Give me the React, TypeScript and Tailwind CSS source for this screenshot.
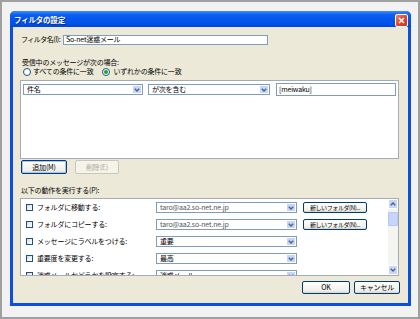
import React from 'react';

const Chevron = ({ up = false }: { up?: boolean }) => (
  <svg width="6" height="4" viewBox="0 0 6 4" className={up ? 'rotate-180' : ''}>
    <path d="M0.8 0.8 L3 3 L5.2 0.8" fill="none" stroke="#4d6185" strokeWidth="1.4" />
  </svg>
);

const Select = ({ value, w, muted = false }: { value: string; w: string; muted?: boolean }) => (
  <div className={`shrink-0 flex items-center border border-[#7f9db9] bg-white ${w} h-[11px]`}>
    <span className={`flex-1 pl-[3px] truncate ${muted ? 'text-[#555]' : 'text-black'}`}>{value}</span>
    <span className="w-[10px] h-full flex items-center justify-center bg-[#c6d6fb] border border-white">
      <Chevron />
    </span>
  </div>
);

const XpButton = ({ children, w, disabled = false, focused = false }: { children: React.ReactNode; w: string; disabled?: boolean; focused?: boolean }) => (
  <div
    className={`flex items-center justify-center rounded-[2px] border h-full ${w} ${
      disabled ? 'border-[#c9c7ba] text-[#aca899] bg-[#f5f4ea]' : 'border-[#003c74] text-black bg-[linear-gradient(to_bottom,#ffffff,#f0efe9_80%,#d8d2c6)]'
    } ${focused ? 'shadow-[inset_0_0_0_1px_#a9c5f5]' : ''}`}
  >
    {children}
  </div>
);

const Radio = ({ checked = false }: { checked?: boolean }) => (
  <span className="w-[8px] h-[8px] rounded-full border border-[#1c5180] bg-white flex items-center justify-center">
    {checked && <span className="w-[4px] h-[4px] rounded-full bg-[#21a121]" />}
  </span>
);

const Check = () => (
  <span className="shrink-0 w-[7px] h-[7px] border border-[#1c5180] bg-[linear-gradient(135deg,#dcdcd7,#ffffff)]" />
);

const actions = [
  { label: 'フォルダに移動する:', value: 'taro@aa2.so-net.ne.jp', folder: true },
  { label: 'フォルダにコピーする:', value: 'taro@aa2.so-net.ne.jp', folder: true },
  { label: 'メッセージにラベルをつける:', value: '重要', folder: false },
  { label: '重要度を変更する:', value: '最高', folder: false },
  { label: '迷惑メールかどうかを設定する:', value: '迷惑メール', folder: false },
];

export default function App() {
  return (
    <div className="w-[420px] h-[319px] border-2 border-[#a0a0a0] bg-[#f2f2f2] pl-[8px] pr-[7px] pt-[9px] pb-[11px] font-['Noto_Sans_CJK_JP','Noto_Sans',sans-serif] text-[7px] leading-[9px] tracking-[-0.2px] whitespace-nowrap text-black overflow-hidden">
      <div className="w-[401px] h-[295px] flex flex-col rounded-t-[5px] bg-[#0a4fe0]">
        <div className="h-[16px] flex items-center justify-between pl-[4px] pr-[3px] rounded-t-[5px] bg-[linear-gradient(to_bottom,#3d8dff,#0a5cf2_25%,#0053e8_75%,#0046d6)]">
          <span className="text-white font-bold text-[7.5px] [text-shadow:1px_1px_0_#0a2f8f]">フィルタの設定</span>
          <span className="w-[13px] h-[13px] mt-[2px] rounded-[2px] border border-white bg-[linear-gradient(135deg,#f0876a,#e2462c_50%,#c23a1e)] flex items-center justify-center">
            <svg width="7" height="7" viewBox="0 0 7 7">
              <path d="M1 1 L6 6 M6 1 L1 6" stroke="white" strokeWidth="1.6" />
            </svg>
          </span>
        </div>
        <div className="flex-1 mx-[3px] mb-[3px] bg-[#ece9d8] flex flex-col pl-[7px] pr-[9px]">
          <div className="mt-[7px] h-[11px] flex items-center">
            <span className="ml-[1px] w-[42px] tracking-[-0.5px]">フィルタ名(I):</span>
            <div className="w-[205px] h-[10px] border border-[#7f9db9] bg-white flex items-center pl-[2px]">So-net迷惑メール</div>
          </div>
          <div className="mt-[13px] h-[9px] ml-[2px]">受信中のメッセージが次の場合:</div>
          <div className="h-[9px] flex items-center">
            <span className="ml-[3px]"><Radio /></span>
            <span className="ml-[2px]">すべての条件に一致</span>
            <span className="ml-[9px]"><Radio checked /></span>
            <span className="ml-[3px]">いずれかの条件に一致</span>
          </div>
          <div className="mt-[4px] h-[79px] w-[379px] border border-[#a5acb5] bg-white pl-[2px] pt-[2px]">
            <div className="flex items-center h-[13px]">
              <Select value="件名" w="w-[120px]" />
              <span className="ml-[5px]"><Select value="が次を含む" w="w-[122px]" /></span>
              <div className="ml-[6px] w-[120px] h-[13px] border border-[#7f9db9] bg-white flex items-center pl-[2px]">[meiwaku]</div>
            </div>
          </div>
          <div className="mt-[1px] h-[14px] flex ml-[1px] gap-[8px]">
            <XpButton w="w-[46px]" focused>追加(M)</XpButton>
            <XpButton w="w-[44px]" disabled>削除(E)</XpButton>
          </div>
          <div className="mt-[12px] h-[9px] ml-[1px]">以下の動作を実行する(P):</div>
          <div className="mt-[3px] h-[78px] w-[379px] border border-[#a5acb5] bg-white flex overflow-hidden">
            <div className="flex-1 flex flex-col">
              {actions.map((a) => (
                <div key={a.label} className="h-[17px] shrink-0 flex items-center pl-[5px]">
                  <Check />
                  <span className="ml-[4px] w-[119px] shrink-0 overflow-hidden">{a.label}</span>
                  <Select value={a.value} w="w-[141px]" muted={a.folder} />
                  {a.folder && (
                    <span className="ml-[6px] h-[11px] flex shrink-0">
                      <XpButton w="w-[64px]"><span className="text-[6px] tracking-[-0.4px]">新しいフォルダ(N)...</span></XpButton>
                    </span>
                  )}
                </div>
              ))}
            </div>
            <div className="w-[10px] shrink-0 flex flex-col bg-[#f4f4f0]">
              <span className="h-[10px] rounded-[1px] bg-[#c6d6fb] border border-white flex items-center justify-center"><Chevron up /></span>
              <span className="mt-[3px] h-[14px] rounded-[1px] bg-[#c6d6fb] border border-[#b4c8f6]" />
              <span className="flex-1" />
              <span className="h-[10px] rounded-[1px] bg-[#c6d6fb] border border-white flex items-center justify-center"><Chevron /></span>
            </div>
          </div>
          <div className="mt-[5px] h-[13px] flex justify-end gap-[4px] -mr-[1px]">
            <XpButton w="w-[48px]">OK</XpButton>
            <XpButton w="w-[46px]">キャンセル</XpButton>
          </div>
        </div>
      </div>
    </div>
  );
}
